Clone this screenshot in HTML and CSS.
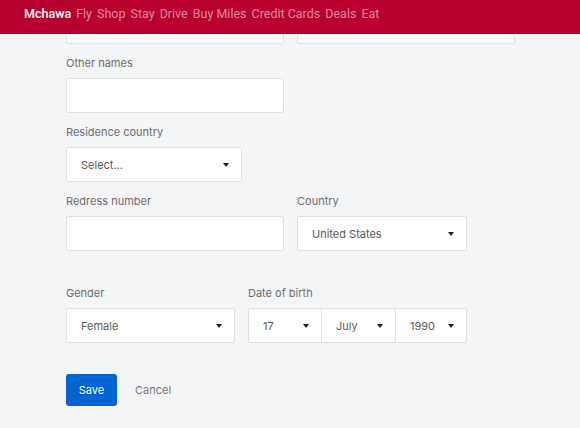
FILE: index.html
```html
<!DOCTYPE html>
<html lang="en">
<head>
    <meta charset="UTF-8">
    <meta name="viewport" content="width=device-width, initial-scale=1.0">
    <title>Profile</title>
    <link rel="stylesheet" href="styles.css">
</head>
<body>
    <header class="topbar">
        <span class="brand">Mchawa</span>
        <a href="#">Fly</a>
        <a href="#">Shop</a>
        <a href="#">Stay</a>
        <a href="#">Drive</a>
        <a href="#">Buy Miles</a>
        <a href="#">Credit Cards</a>
        <a href="#">Deals</a>
        <a href="#">Eat</a>
    </header>

    <form class="profile-form">
        <div class="row">
            <input class="field wide" type="text">
            <input class="field wide" type="text">
        </div>

        <div class="group">
            <label>Other names</label>
            <input class="field wide" type="text">
        </div>

        <div class="group">
            <label>Residence country</label>
            <div class="select residence"><span>Select...</span><i class="caret"></i></div>
        </div>

        <div class="row">
            <div class="group">
                <label>Redress number</label>
                <input class="field wide" type="text">
            </div>
            <div class="group">
                <label>Country</label>
                <div class="select country"><span>United States</span><i class="caret"></i></div>
            </div>
        </div>

        <div class="row spaced">
            <div class="group">
                <label>Gender</label>
                <div class="select gender"><span>Female</span><i class="caret"></i></div>
            </div>
            <div class="group">
                <label>Date of birth</label>
                <div class="date">
                    <div class="part day"><span>17</span><i class="caret"></i></div>
                    <div class="part month"><span>July</span><i class="caret"></i></div>
                    <div class="part year"><span>1990</span><i class="caret"></i></div>
                </div>
            </div>
        </div>

        <div class="actions">
            <button type="button" class="save">Save</button>
            <button type="button" class="cancel">Cancel</button>
        </div>
    </form>
</body>
</html>
```

FILE: styles.css
```css
body {
    font-family: Inter, "Noto Sans", sans-serif;
    background-color: #f4f5f7;
    margin: 0;
    color: #555;
}
.topbar {
    position: fixed;
    top: 0;
    left: 0;
    right: 0;
    height: 34px;
    background-color: #b8002f;
    display: flex;
    align-items: center;
    gap: 5px;
    padding: 0 0 8px 24px;
    box-sizing: border-box;
    font-family: Roboto, "Liberation Sans", sans-serif;
    font-size: 12.5px;
    z-index: 2;
}
.topbar .brand {
    color: #fff;
    font-weight: 500;
}
.topbar a {
    color: rgba(255, 255, 255, 0.55);
    text-decoration: none;
}
.profile-form {
    padding: 9px 0 0 66px;
    display: flex;
    flex-direction: column;
    gap: 11px;
}
.row {
    display: flex;
    gap: 13px;
}
.row.spaced {
    margin-top: 23px;
}
.group {
    display: flex;
    flex-direction: column;
    align-items: flex-start;
}
label {
    font-size: 11px;
    line-height: 16px;
    color: #6d6e70;
    margin-bottom: 7px;
}
.field {
    height: 35px;
    box-sizing: border-box;
    border: 1px solid #dfe0e2;
    border-radius: 2px;
    background-color: #fff;
    margin: 0;
}
.wide {
    width: 218px;
}
.select {
    height: 35px;
    box-sizing: border-box;
    border: 1px solid #dfe0e2;
    border-radius: 2px;
    background-color: #fff;
    display: flex;
    align-items: center;
    justify-content: space-between;
    padding: 0 12px 0 14px;
    font-size: 11px;
    color: #5a5a5a;
}
.residence {
    width: 176px;
}
.country {
    width: 170px;
}
.gender {
    width: 169px;
}
.caret {
    width: 0;
    height: 0;
    border-left: 3.5px solid transparent;
    border-right: 3.5px solid transparent;
    border-top: 4px solid #222;
}
.date {
    display: flex;
    width: 219px;
    height: 35px;
    box-sizing: border-box;
    border: 1px solid #dfe0e2;
    border-radius: 2px;
    background-color: #fff;
}
.part {
    display: flex;
    align-items: center;
    justify-content: space-between;
    padding: 0 12px 0 14px;
    font-size: 11px;
    color: #5a5a5a;
}
.part + .part {
    border-left: 1px solid #dfe0e2;
}
.day {
    width: 72px;
    box-sizing: border-box;
}
.month {
    width: 74px;
    box-sizing: border-box;
}
.year {
    flex: 1;
}
.actions {
    display: flex;
    align-items: center;
    margin-top: 20px;
}
.save {
    width: 51px;
    height: 32px;
    background-color: #0064d2;
    color: #fff;
    border: none;
    border-radius: 3px;
    font-family: inherit;
    font-size: 11px;
    cursor: pointer;
}
.cancel {
    background: none;
    border: none;
    color: #777;
    font-family: inherit;
    font-size: 11px;
    margin-left: 12px;
    cursor: pointer;
}
```
